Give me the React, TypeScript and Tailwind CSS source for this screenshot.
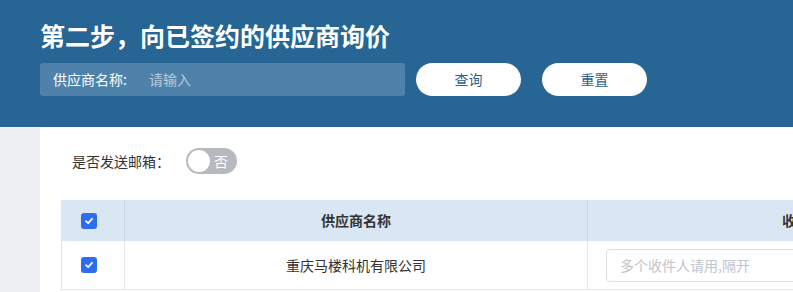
import React from "react";

const font = { fontFamily: '"Microsoft YaHei", "Noto Sans CJK SC", "Noto Sans", sans-serif' };

function Check() {
  return (
    <span className="inline-flex h-[16px] w-[16px] items-center justify-center rounded-[3px] bg-[#2b6cf0]">
      <svg width="10" height="10" viewBox="0 0 10 10">
        <path d="M2 5.2 L4.2 7.2 L8 2.8" stroke="white" strokeWidth="1.8" fill="none" strokeLinecap="round" strokeLinejoin="round" />
      </svg>
    </span>
  );
}

export default function App() {
  return (
    <div className="h-[292px] w-[793px] overflow-hidden bg-white" style={font}>
      <div className="h-[127px] bg-[#266594] pl-[40px] pt-[18px]">
        <div className="text-[25px] font-bold leading-[34px] text-white">第二步，向已签约的供应商询价</div>
        <div className="mt-[11px] flex items-center">
          <div className="flex h-[33px] w-[365px] items-center rounded-[3px] bg-[#4e82ab] pl-[13px] text-[14px]">
            <span className="text-white">供应商名称:</span>
            <span className="ml-[22px] text-[#b9cbdb]">请输入</span>
          </div>
          <button className="ml-[11px] h-[33px] w-[105px] rounded-full bg-white text-[14px] text-[#2f5f8a]">查询</button>
          <button className="ml-[21px] h-[33px] w-[105px] rounded-full bg-white text-[14px] text-[#2f5f8a]">重置</button>
        </div>
      </div>
      <div className="flex h-[165px]">
        <div className="w-[40px] shrink-0 bg-[#eff0f4]" />
        <div className="flex-1 overflow-hidden pl-[21px]">
          <div className="mt-[21px] flex items-center pl-[11px] text-[14px] text-[#333]">
            <span>是否发送邮箱：</span>
            <span className="ml-[16px] flex h-[26px] w-[51px] items-center rounded-full bg-[#b6b9bf] pl-[2px]">
              <span className="h-[22px] w-[22px] rounded-full bg-white" />
              <span className="ml-[4px] text-[14px] text-white">否</span>
            </span>
          </div>
          <div className="mt-[26px] w-[1000px] border-l border-[#e4e8ee] text-[14px] text-[#333]">
            <div className="flex h-[41px] bg-[#d9e7f5]">
              <div className="flex w-[63px] shrink-0 items-center border-r border-[#c9d6e3] pl-[19px]">
                <Check />
              </div>
              <div className="flex w-[463px] shrink-0 items-center justify-center border-r border-[#c9d6e3] font-bold">供应商名称</div>
              <div className="flex w-[458px] shrink-0 items-center justify-center font-bold">收件人邮箱</div>
            </div>
            <div className="flex h-[49px] border-b border-[#e4e8ee]">
              <div className="flex w-[63px] shrink-0 items-center border-r border-[#e4e8ee] pl-[19px]">
                <Check />
              </div>
              <div className="flex w-[463px] shrink-0 items-center justify-center border-r border-[#e4e8ee]">重庆马楼科机有限公司</div>
              <div className="flex w-[458px] shrink-0 items-center pl-[18px]">
                <div className="flex h-[33px] w-[300px] items-center rounded-[4px] border border-[#dcdfe6] pl-[13px] text-[#c0c4cc]">多个收件人请用,隔开</div>
              </div>
            </div>
          </div>
        </div>
      </div>
    </div>
  );
}
